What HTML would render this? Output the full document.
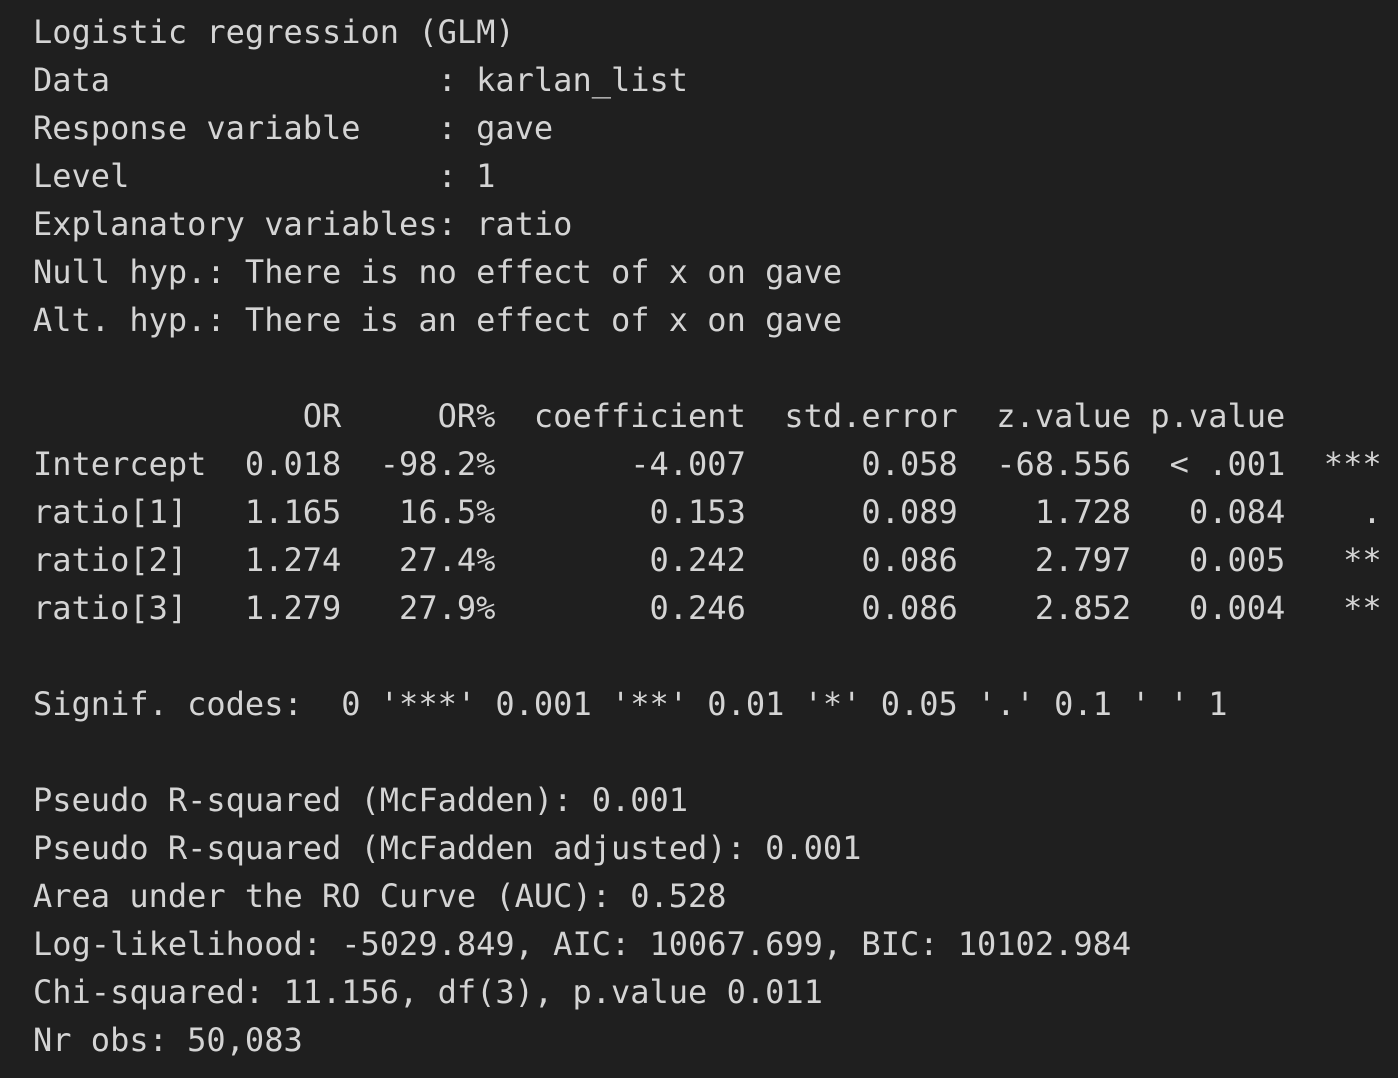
<!DOCTYPE html>
<html><head><meta charset="utf-8"><style>
html,body{margin:0;padding:0;background:#1f1f1f;width:1398px;height:1078px;overflow:hidden}
pre{margin:0;position:absolute;left:33px;top:8px;font-family:"DejaVu Sans Mono","Liberation Mono",monospace;font-size:32px;line-height:48px;color:#d4d4d4;white-space:pre}
</style></head><body><pre>Logistic regression (GLM)
Data                 : karlan_list
Response variable    : gave
Level                : 1
Explanatory variables: ratio
Null hyp.: There is no effect of x on gave
Alt. hyp.: There is an effect of x on gave

              OR     OR%  coefficient  std.error  z.value p.value
Intercept  0.018  -98.2%       -4.007      0.058  -68.556  &lt; .001  ***
ratio[1]   1.165   16.5%        0.153      0.089    1.728   0.084    .
ratio[2]   1.274   27.4%        0.242      0.086    2.797   0.005   **
ratio[3]   1.279   27.9%        0.246      0.086    2.852   0.004   **

Signif. codes:  0 '***' 0.001 '**' 0.01 '*' 0.05 '.' 0.1 ' ' 1

Pseudo R-squared (McFadden): 0.001
Pseudo R-squared (McFadden adjusted): 0.001
Area under the RO Curve (AUC): 0.528
Log-likelihood: -5029.849, AIC: 10067.699, BIC: 10102.984
Chi-squared: 11.156, df(3), p.value 0.011
Nr obs: 50,083</pre></body></html>
